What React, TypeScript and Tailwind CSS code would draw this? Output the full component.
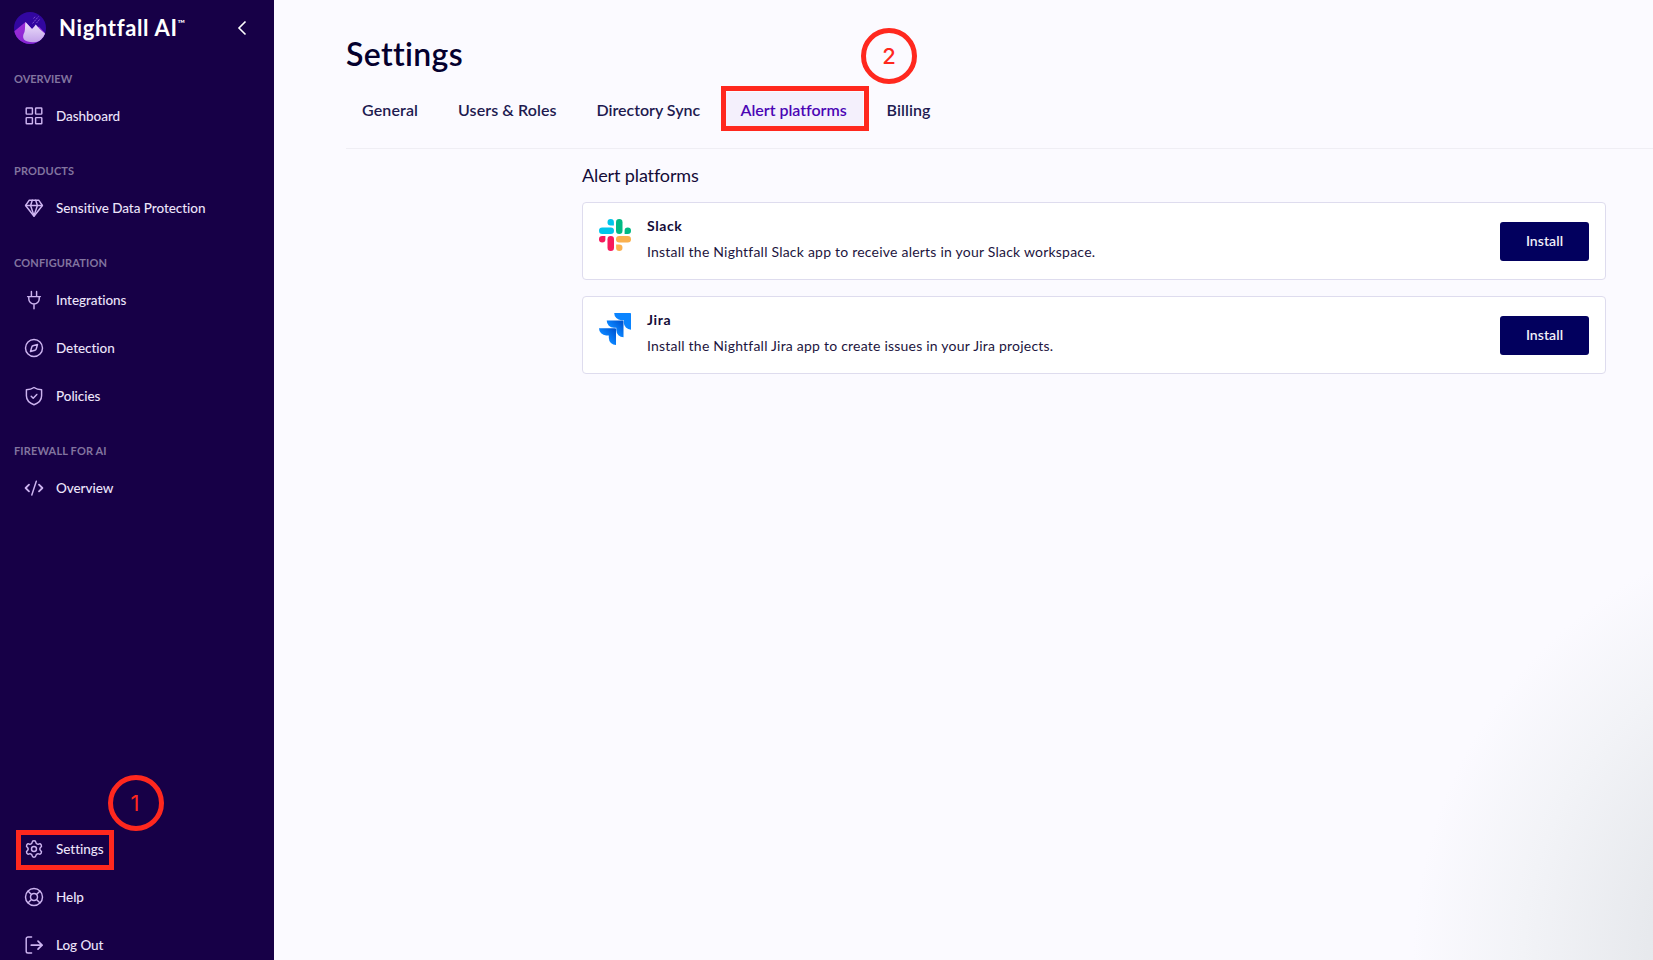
import type { ReactNode } from "react";

function Glyph({ children }: { children: ReactNode }) {
  return (
    <svg
      viewBox="0 0 20 20"
      className="h-5 w-5 shrink-0 text-[#cdb4f0]"
      fill="none"
      stroke="currentColor"
      strokeWidth="1.45"
      strokeLinecap="round"
      strokeLinejoin="round"
    >
      {children}
    </svg>
  );
}

const DashboardIcon = () => (
  <Glyph>
    <rect x="2.2" y="1.9" width="6.2" height="6.2" rx="0.6" />
    <rect x="11.6" y="1.9" width="6.2" height="6.2" rx="0.6" />
    <rect x="2.2" y="11.6" width="6.2" height="6.2" rx="0.6" />
    <rect x="11.6" y="11.6" width="6.2" height="6.2" rx="0.6" />
  </Glyph>
);

const DiamondIcon = () => (
  <Glyph>
    <path d="M5.3 2.2h9.4l3.7 5.3L10 18.2 1.6 7.5z" />
    <path d="M1.6 7.5h16.8M6.6 7.5 10 17.8l3.4-10.3M6.6 7.5 8.3 2.2M13.4 7.5 11.7 2.2" />
  </Glyph>
);

const PlugIcon = () => (
  <Glyph>
    <path d="M7.4 1.4v5.2M12.6 1.4v5.2M3.6 6.6h12.8M4.8 6.6v2.3a5.2 5.2 0 0 0 10.4 0V6.6M10 14.2v4.6" />
  </Glyph>
);

const CompassIcon = () => (
  <Glyph>
    <circle cx="10" cy="10" r="8.5" />
    <path d="M13.5 6.5 12.2 11a1.8 1.8 0 0 1-1.2 1.2L6.5 13.5 7.8 9A1.8 1.8 0 0 1 9 7.8z" />
  </Glyph>
);

const ShieldIcon = () => (
  <Glyph>
    <path d="M10 1.5C8 3 5.2 3.8 2.4 3.8v6c0 4.2 2.8 7.2 7.6 8.9 4.8-1.7 7.6-4.7 7.6-8.9v-6C14.8 3.8 12 3 10 1.5z" />
    <path d="m7.2 10.2 2 2 3.6-3.8" />
  </Glyph>
);

const CodeIcon = () => (
  <Glyph>
    <path d="M12.3 3.2 7.8 17" />
    <path strokeWidth="1.8" d="M5 6.6 1.6 10 5 13.4M15 6.6 18.4 10 15 13.4" />
  </Glyph>
);

const GearIcon = () => (
  <svg
    viewBox="0 0 24 24"
    className="h-5 w-5 shrink-0 text-[#cdb4f0]"
    fill="none"
    stroke="currentColor"
    strokeWidth="1.75"
    strokeLinecap="round"
    strokeLinejoin="round"
  >
    <path d="M9.671 4.136a2.34 2.34 0 0 1 4.659 0 2.34 2.34 0 0 0 3.319 1.915 2.34 2.34 0 0 1 2.33 4.033 2.34 2.34 0 0 0 0 3.831 2.34 2.34 0 0 1-2.33 4.033 2.34 2.34 0 0 0-3.319 1.915 2.34 2.34 0 0 1-4.659 0 2.34 2.34 0 0 0-3.32-1.915 2.34 2.34 0 0 1-2.33-4.033 2.34 2.34 0 0 0 0-3.831A2.34 2.34 0 0 1 6.35 6.051a2.34 2.34 0 0 0 3.319-1.915" />
    <circle cx="12" cy="12" r="3" />
  </svg>
);

const HelpIcon = () => (
  <Glyph>
    <circle cx="10" cy="10" r="8.5" />
    <circle cx="10" cy="10" r="3.5" />
    <path d="M4.2 4.2 7.5 7.5M15.8 4.2 12.5 7.5M4.2 15.8 7.5 12.5M15.8 15.8 12.5 12.5" />
  </Glyph>
);

const LogOutIcon = () => (
  <Glyph>
    <path d="M7.6 2H4a1.8 1.8 0 0 0-1.8 1.8v12.4A1.8 1.8 0 0 0 4 18h3.6" />
    <path strokeWidth="1.7" d="M7.3 10.2h10.8M14 6.2l4.1 4L14 14.2" />
  </Glyph>
);

function Logo() {
  return (
    <svg viewBox="0 0 32 32" className="h-8 w-8 shrink-0">
      <defs>
        <clipPath id="disc">
          <circle cx="16" cy="16" r="16" />
        </clipPath>
        <linearGradient id="snow" x1="0" y1="0" x2="0" y2="1">
          <stop offset="0" stopColor="#eee2fb" />
          <stop offset="1" stopColor="#c3a3ea" />
        </linearGradient>
        <linearGradient id="ridge" x1="0" y1="0" x2="1" y2="1">
          <stop offset="0" stopColor="#a02fd8" />
          <stop offset="1" stopColor="#7a1fd0" />
        </linearGradient>
      </defs>
      <g clipPath="url(#disc)">
        <rect width="32" height="32" fill="#3207a0" />
        <path d="M0 19.5 11.5 10 20 19l5-4.5L32 22v10H0z" fill="url(#ridge)" />
        <path
          d="M11.5 10 18 17l2.3-2.5 1.4-2 4 4.500 6.300 5.500c-1.500 5-6 7-10 7.500-5 .6-9.500 0-12-2.500-1.500-2-1-5 .5-7.500.8-3 .3-6 1-10z"
          fill="url(#snow)"
        />
        <path
          d="M18.500 11.500 24.500 4.500M22.500 11 26 7M19.500 6.500 21.500 4.300"
          stroke="#9a6be0"
          strokeWidth="0.9"
          strokeDasharray="2 0.700"
          opacity="0.8"
        />
      </g>
    </svg>
  );
}

function NavItem({ icon, label }: { icon: ReactNode; label: string }) {
  return (
    <a className="flex h-12 shrink-0 items-center gap-3 pl-6 text-[13.5px] font-medium tracking-[-0.05px] text-[#ece4fa]">
      {icon}
      <span>{label}</span>
    </a>
  );
}

function NavHeading({ children, first }: { children: ReactNode; first?: boolean }) {
  return (
    <h2
      className={
        first
          ? "shrink-0 pt-[19px] pb-px pl-3.5 text-[11px] leading-6 font-bold text-[#82749f]"
          : "shrink-0 pt-[19px] pb-px pl-3.5 text-[11px] leading-6 font-bold tracking-[0.14px] text-[#82749f]"
      }
    >
      {children}
    </h2>
  );
}

function Sidebar() {
  return (
    <aside className="flex w-[274px] shrink-0 flex-col overflow-hidden bg-[#170047]">
      <div className="flex h-12 shrink-0 items-center pt-2 pl-3.5">
        <Logo />
        <div className="ml-[13px] flex items-start text-white">
          <span className="text-[22px] leading-7 font-bold tracking-[0.65px]">Nightfall AI</span>
          <span className="mt-[3px] text-[10px] leading-3 font-semibold">™</span>
        </div>
        <svg
          viewBox="0 0 10 16"
          className="mr-[27px] ml-auto h-4 w-2.5"
          fill="none"
          stroke="#ffffff"
          strokeWidth="1.6"
        >
          <path d="M8.500 1.500 2 8l6.500 6.500" />
        </svg>
      </div>
      <NavHeading first>OVERVIEW</NavHeading>
      <NavItem icon={<DashboardIcon />} label="Dashboard" />
      <NavHeading>PRODUCTS</NavHeading>
      <NavItem icon={<DiamondIcon />} label="Sensitive Data Protection" />
      <NavHeading>CONFIGURATION</NavHeading>
      <NavItem icon={<PlugIcon />} label="Integrations" />
      <NavItem icon={<CompassIcon />} label="Detection" />
      <NavItem icon={<ShieldIcon />} label="Policies" />
      <NavHeading>FIREWALL FOR AI</NavHeading>
      <NavItem icon={<CodeIcon />} label="Overview" />
      <div className="relative mt-[313px] shrink-0">
        <NavItem icon={<GearIcon />} label="Settings" />
        <div className="absolute top-[5px] left-4 h-10 w-[98px] border-5 border-[#ff281e]" />
        <div className="absolute -top-[50px] left-[108px] flex h-[56px] w-[56px] items-center justify-center rounded-full border-5 border-[#ff281e] pr-0.5 font-[Inter] text-[22px] text-[#ff281e]">
          1
        </div>
      </div>
      <NavItem icon={<HelpIcon />} label="Help" />
      <NavItem icon={<LogOutIcon />} label="Log Out" />
    </aside>
  );
}

function SlackLogo() {
  return (
    <svg viewBox="0 0 32 32" className="h-8 w-8 shrink-0">
      <path fill="#00c5ea" d="M11.700 0a3.200 3.200 0 1 0 0 6.400h3.200V3.200A3.200 3.200 0 0 0 11.700 0z" />
      <rect fill="#00c5ea" y="8.500" width="15" height="6.500" rx="3.250" />
      <path fill="#00b984" d="M32 11.700a3.200 3.200 0 1 0-6.400 0v3.200h3.200a3.200 3.200 0 0 0 3.200-3.200z" />
      <rect fill="#00b984" x="17" width="6.500" height="15" rx="3.250" />
      <path fill="#fab04e" d="M20.300 32a3.200 3.200 0 1 0 0-6.400h-3.200v3.200a3.200 3.200 0 0 0 3.200 3.200z" />
      <rect fill="#fab04e" x="17" y="17" width="15" height="6.500" rx="3.250" />
      <path fill="#f7195c" d="M0 20.300a3.200 3.200 0 1 0 6.400 0v-3.200H3.200A3.200 3.200 0 0 0 0 20.300z" />
      <rect fill="#f7195c" x="8.500" y="17" width="6.500" height="15" rx="3.250" />
    </svg>
  );
}

function JiraLogo() {
  return (
    <svg viewBox="0 0 32 32" className="h-8 w-8 shrink-0">
      <defs>
        <linearGradient id="jiraFold" x1="1" y1="0" x2="0.300" y2="0.700">
          <stop offset="0.150" stopColor="#0058d4" />
          <stop offset="0.800" stopColor="#0a84ff" />
        </linearGradient>
      </defs>
      <path
        fill="#0a84ff"
        d="M15.200 0H31.200a.8.800 0 0 1 .8.800V16.700a7.200 7.200 0 0 1-7.200-7.200V7.200h-2.400A7.200 7.200 0 0 1 15.200 0z"
      />
      <path
        fill="url(#jiraFold)"
        d="M7.700 7.600H23.700a.8.800 0 0 1 .8.800V24.300a7.200 7.200 0 0 1-7.200-7.200v-2.300h-2.400A7.200 7.200 0 0 1 7.700 7.600z"
      />
      <path
        fill="url(#jiraFold)"
        d="M0 15.200H16.200a.8.800 0 0 1 .8.800V32a7.200 7.200 0 0 1-7.200-7.200v-2.400H7.200A7.200 7.200 0 0 1 0 15.200z"
      />
    </svg>
  );
}

function PlatformCard({ logo, name, description }: { logo: ReactNode; name: string; description: string }) {
  return (
    <section className="flex h-[78px] items-center rounded border border-[#dedcee] bg-white px-4">
      <div className="-mt-3 mr-4">{logo}</div>
      <div className="-mt-1 flex-1">
        <h3 className="text-sm leading-5 font-bold tracking-[0.6px] text-[#140b38]">{name}</h3>
        <p className="mt-1.5 text-sm leading-5 tracking-[0.22px] text-[#1d1540]">{description}</p>
      </div>
      <button className="h-[39px] w-[89px] rounded-[3px] bg-[#02005e] text-sm font-semibold tracking-[0.05px] text-[#f1eff8]">
        Install
      </button>
    </section>
  );
}

export default function App() {
  return (
    <div className="flex h-[960px] w-[1653px] overflow-hidden bg-[#fbfaff] font-[Lato,sans-serif] [font-variant-ligatures:none]">
      <Sidebar />
      <main className="flex-1 bg-[radial-gradient(circle_at_1853px_960px,#d6dadd_0px,#e7e9ed_205px,#f2f3f7_330px,#fbfaff_440px)] bg-fixed pl-[72px]">
        <h1 className="pt-[34px] text-[32px] leading-10 font-semibold tracking-[0.35px] text-[#05002e]">
          Settings
        </h1>
        <nav className="mt-[18px] flex h-[57px] gap-2 border-b border-[#efeef4] text-base font-semibold text-[#1e1a50]">
          <a className="h-9 w-[88px] pl-4 leading-[35px] tracking-[0.13px]">General</a>
          <a className="h-9 w-[130.500px] pl-4 leading-[35px] tracking-[0.09px]">Users &amp; Roles</a>
          <a className="h-9 w-[136px] pl-4 leading-[35px] tracking-[-0.02px]">Directory Sync</a>
          <div className="relative h-9 w-[138px] bg-[#f4f0fc] pl-4 leading-[35px] tracking-[-0.02px] text-[#4b05b5]">
            Alert platforms
            <div className="absolute -top-[6px] -left-[3.500px] h-[45px] w-[148px] border-5 border-[#ff281e]" />
            <div className="absolute -top-[64px] left-[136.500px] flex h-[56px] w-[56px] items-center justify-center rounded-full border-5 border-[#ff281e] font-[Inter] text-[22px] font-medium text-[#ff281e]">
              2
            </div>
          </div>
          <a className="h-9 pl-4 leading-[35px] tracking-[0.11px]">Billing</a>
        </nav>
        <div className="mr-[47px] ml-[236px] pt-3">
          <h2 className="text-lg leading-7 tracking-[-0.12px] text-[#140b38]">Alert platforms</h2>
          <div className="mt-[13px] flex flex-col gap-4">
            <PlatformCard
              logo={<SlackLogo />}
              name="Slack"
              description="Install the Nightfall Slack app to receive alerts in your Slack workspace."
            />
            <PlatformCard
              logo={<JiraLogo />}
              name="Jira"
              description="Install the Nightfall Jira app to create issues in your Jira projects."
            />
          </div>
        </div>
      </main>
    </div>
  );
}
